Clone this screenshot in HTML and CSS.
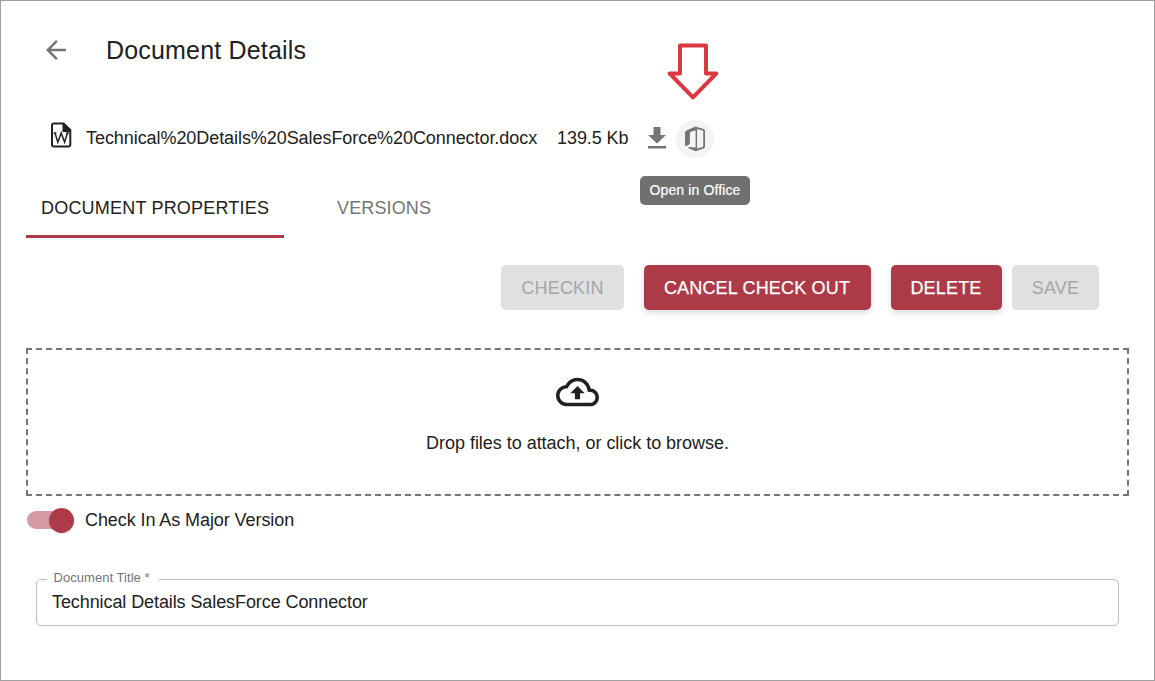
FILE: index.html
```html
<!DOCTYPE html>
<html lang="en">
<head>
<meta charset="utf-8">
<title>Document Details</title>
<link rel="stylesheet" href="styles.css">
</head>
<body>
<main class="page">
  <header class="header">
    <svg class="back" viewBox="0 0 24 24"><path d="M20 11H7.83l5.59-5.59L12 4l-8 8 8 8 1.41-1.41L7.83 13H20v-2z"/></svg>
    <h1 class="title">Document Details</h1>
  </header>

  <section class="file">
    <svg class="word" viewBox="0 0 22 26">
      <path class="sheet" d="M3.2 1.500H13.500L20.300 8v14.800a1.700 1.700 0 0 1-1.700 1.700H3.700a1.700 1.700 0 0 1-1.700-1.700V3.200a1.700 1.700 0 0 1 1.700-1.700z"/>
      <path class="fold" d="M12.500 1h1.500L21 8v2h-8.500z"/>
      <path class="mark" d="M4.900 10.800l2.900 9.400 3.400-9.200 3.400 9.200 2.900-9.400M3.600 11.100h2.800M16.100 11.100h2.800"/>
    </svg>
    <span class="filename">Technical%20Details%20SalesForce%20Connector.docx</span>
    <span class="filesize">139.5 Kb</span>
    <svg class="download" viewBox="0 0 18 22"><path d="M5.500 0h7v8H18l-9 8.500L0 8h5.500zM0 19h18v2.500H0z"/></svg>
    <span class="office">
      <svg class="office-icon" viewBox="0 0 20 26"><path fill-rule="evenodd" d="M10.500.5L18.500 3q1.500.5 1.500 2v15.500q0 1.500-1.500 2l-8 2.700L3.600 22.200q-1-.6 0-1.200l7 .6V4.300L6 5.800q-1.100.4-1.100 1.600v9.700q0 1-.8 1.500l-2.600 1.500Q0 20.700 0 18.500V7q0-1.800 1.500-2.500zM12.100 2.900v19.700l5.500-1.700q.6-.3.600-1V5.600q0-.8-.6-1z"/></svg>
      <svg class="pointer" viewBox="0 0 52 58"><path d="M13 3.500h26v28h10.300L26 55.300 2.700 31.500h10.300z"/></svg>
      <span class="tooltip">Open in Office</span>
    </span>
  </section>

  <nav class="tabs">
    <span class="tab active"><span class="t-props">DOCUMENT PROPERTIES</span></span>
    <span class="tab"><span class="t-vers">VERSIONS</span></span>
  </nav>

  <div class="actions">
    <button class="btn checkin" disabled>CHECKIN</button>
    <button class="btn primary cancel">CANCEL CHECK OUT</button>
    <button class="btn primary delete">DELETE</button>
    <button class="btn save" disabled>SAVE</button>
  </div>

  <section class="dropzone">
    <svg class="cloud" viewBox="0 4 24 16"><path d="M19.350 10.040C18.670 6.590 15.640 4 12 4 9.110 4 6.600 5.640 5.350 8.040 2.340 8.360 0 10.910 0 14c0 3.310 2.690 6 6 6h13c2.760 0 5-2.240 5-5 0-2.640-2.050-4.780-4.650-4.960zM19 18H6c-2.210 0-4-1.790-4-4 0-2.050 1.530-3.760 3.560-3.970l1.070-.11.500-.95C8.080 7.140 9.940 6 12 6c2.620 0 4.880 1.860 5.390 4.430l.3 1.500 1.530.11c1.560.1 2.780 1.410 2.780 2.960 0 1.650-1.350 3-3 3zM8 12.700h2.550v3.300h2.900v-3.300H16l-4-4z"/></svg>
    <span class="drop-text">Drop files to attach, or click to browse.</span>
  </section>

  <label class="major">
    <span class="switch"><span class="thumb"></span></span>
    <span class="major-text">Check In As Major Version</span>
  </label>

  <fieldset class="field">
    <legend class="legend">Document Title *</legend>
    <span class="value">Technical Details SalesForce Connector</span>
  </fieldset>
</main>
</body>
</html>
```
FILE: styles.css
```css
* { box-sizing: border-box; }
body {
  margin: 0;
  font-family: "Liberation Sans", Arial, sans-serif;
  font-size: 18px;
  color: #212121;
  background: #fff;
}
svg { display: block; flex: none; }
.page {
  display: flex;
  flex-direction: column;
  height: 681px;
  border: 1px solid #a0a0a0;
  padding: 24px 25px 0;
  white-space: nowrap;
}
.header { display: flex; align-items: center; height: 50px; padding-left: 15px; }
.back { width: 30px; height: 30px; fill: #757575; }
.title { margin: 0 0 0 35px; font-size: 25px; font-weight: 400; line-height: 50px; letter-spacing: .18px; }
.file { display: flex; align-items: center; height: 40px; margin-top: 43px; padding-left: 24px; }
.word { width: 22px; height: 26px; margin-top: -6px; }
.sheet { fill: #fff; stroke: #212121; stroke-width: 2; }
.fold { fill: #212121; }
.mark { fill: none; stroke: #212121; stroke-width: 1.5; }
.filename { width: 451px; margin-left: 14px; letter-spacing: -.065px; }
.filesize { width: 71px; margin-left: 20px; letter-spacing: -.07px; }
.download { width: 18px; height: 22px; margin-left: 20px; fill: #757575; }
.office {
  position: relative;
  display: flex;
  align-items: center;
  justify-content: center;
  width: 38px;
  height: 38px;
  margin: 2px 0 0 10px;
  border-radius: 50%;
  background: #f4f4f4;
}
.office-icon { width: 20px; height: 26px; fill: #757575; }
.pointer { position: absolute; left: -9px; top: -78px; width: 52px; height: 58px; fill: #fff; stroke: #dc3840; stroke-width: 4; stroke-linejoin: round; }
.tooltip {
  position: absolute;
  left: -36px;
  top: 55.5px;
  width: 110px;
  height: 29px;
  border-radius: 5px;
  background: #707070;
  color: #fff;
  font-size: 14px;
  line-height: 28px;
  letter-spacing: .12px;
  text-align: center;
  -webkit-text-stroke: .2px #fff;
}
.tabs { display: flex; height: 60px; margin-top: 20px; }
.tab { width: 258px; padding-left: 15px; line-height: 60px; color: #757575; }
.tab.active { border-bottom: 3px solid #ad3a47; color: #212121; }
.tab + .tab { padding-left: 53px; }
.t-props { letter-spacing: .2px; }
.t-vers { letter-spacing: .13px; }
.actions { display: flex; height: 45px; margin-top: 27px; padding-left: 475px; }
.btn {
  height: 45px;
  padding: 1px 0 0;
  border: 0;
  border-radius: 5px;
  font: inherit;
  letter-spacing: .18px;
  background: #e0e0e0;
  color: #a6a6a6;
}
.primary { padding-right: 1px; background: #ad3a47; color: #fff; box-shadow: 0 3px 6px rgba(0, 0, 0, .14); -webkit-text-stroke: .25px #fff; }
.checkin { width: 123px; }
.cancel { width: 227px; margin-left: 20px; }
.delete { width: 111px; margin-left: 20px; }
.save { width: 87px; margin-left: 10px; }
.dropzone {
  display: flex;
  flex-direction: column;
  align-items: center;
  width: 1103px;
  height: 148px;
  margin-top: 38px;
  padding-top: 27px;
  border: 2px dashed #757575;
}
.cloud { width: 43px; height: 30px; fill: #212121; }
.drop-text { margin-top: 25px; line-height: 22px; letter-spacing: -.03px; }
.major { display: flex; align-items: center; height: 30px; margin-top: 9px; padding-left: 1px; }
.switch { display: flex; align-items: center; justify-content: flex-end; width: 47px; height: 18px; border-radius: 9px; background: linear-gradient(90deg, #d69ca3 38px, transparent 38px); }
.thumb { width: 25px; height: 25px; flex: none; border-radius: 50%; background: #ad3a47; box-shadow: 0 1px 2px rgba(0, 0, 0, .12); }
.major-text { margin-left: 11px; letter-spacing: -.08px; }
.field {
  width: 1083px;
  height: 55px;
  margin: 36px 0 0 10px;
  padding: 0 15px;
  border: 1px solid #bdbdbd;
  border-radius: 5px;
}
.legend { width: 112px; height: 16px; margin-left: -5px; padding: 0 6.5px; font-size: 13px; line-height: 13px; letter-spacing: .05px; color: #757575; }
.value { display: block; line-height: 22px; margin-top: 4px; letter-spacing: -.09px; }
```
